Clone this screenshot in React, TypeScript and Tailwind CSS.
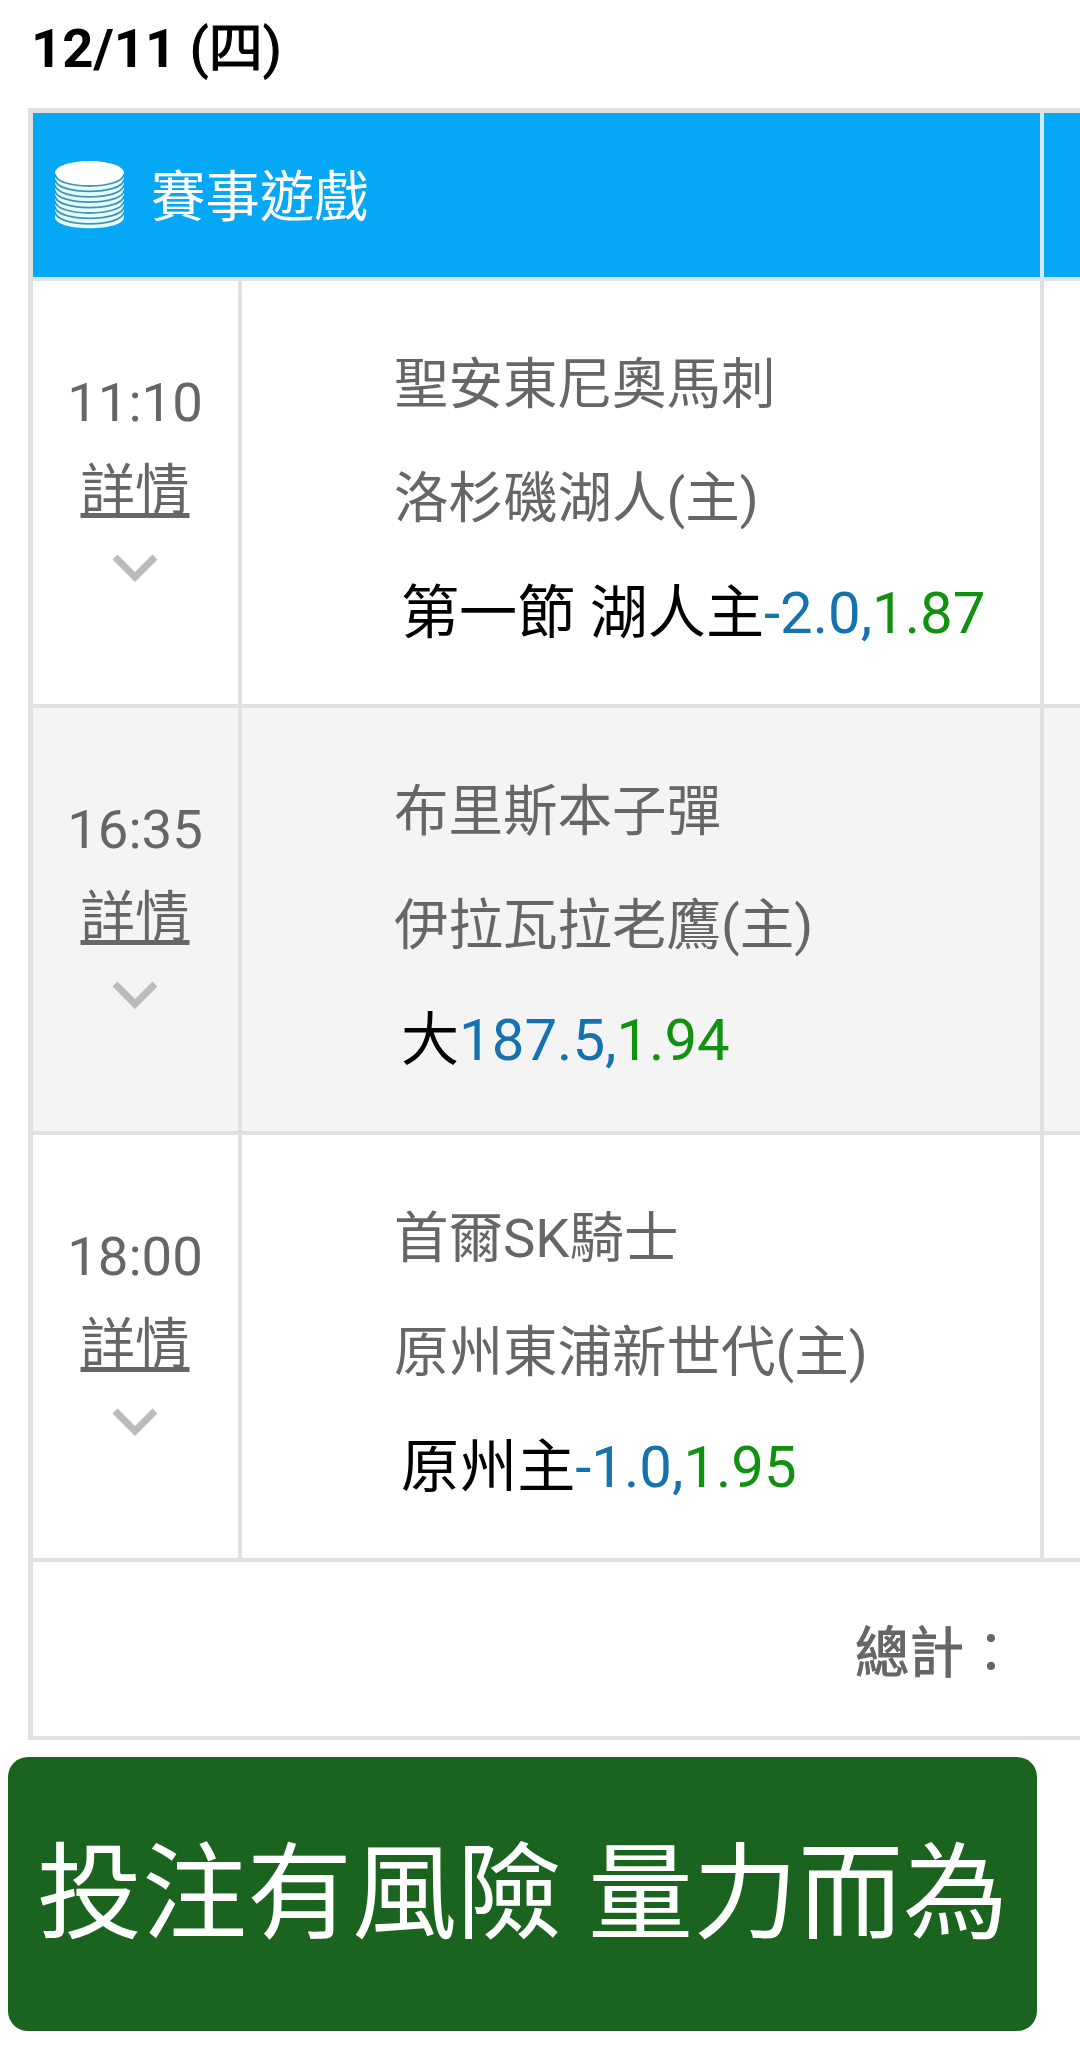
import React from 'react';

type Match = {
  time: string;
  away: string;
  home: string;
  pick: string;
  line: string;
  odds: string;
};

const matches: Match[] = [
  { time: '11:10', away: '聖安東尼奧馬刺', home: '洛杉磯湖人(主)', pick: '第一節 湖人主', line: '-2.0,', odds: '1.87' },
  { time: '16:35', away: '布里斯本子彈', home: '伊拉瓦拉老鷹(主)', pick: '大', line: '187.5,', odds: '1.94' },
  { time: '18:00', away: '首爾SK騎士', home: '原州東浦新世代(主)', pick: '原州主', line: '-1.0,', odds: '1.95' },
];

const seams = [12, 17.4, 22.8, 28.2, 33.6, 39, 44.4, 49.8];

function CoinStack() {
  return (
    <svg width="69" height="68" viewBox="0 0 69 68" fill="none">
      <path d="M0 12.5C0 -4 69 -4 69 12.5V56C69 71 0 71 0 56Z" fill="#e6fdff" />
      <ellipse cx="34.5" cy="12.3" rx="34.5" ry="12.3" fill="#fff" />
      {seams.map((y) => (
        <path key={y} d={`M0 ${y + 1}C1 ${y + 17} 68 ${y + 17} 69 ${y + 1}`} stroke="#4294b4" strokeWidth="1.8" />
      ))}
    </svg>
  );
}

function MatchRow({ match, striped }: { match: Match; striped: boolean }) {
  return (
    <div className={`flex h-[427px] border-b-4 border-[#e0e0e0] ${striped ? 'bg-[#f4f4f4]' : 'bg-white'}`}>
      <div className="flex w-[209px] shrink-0 flex-col items-center border-r-4 border-[#e0e0e0] pr-px pt-[76px] text-[54.5px] text-[#666]">
        <div className="h-[89px] leading-[90px]">{match.time}</div>
        <a className="h-[88px] leading-[88px] underline decoration-[5px] underline-offset-[4px]">詳情</a>
        <svg className="mt-[20px]" width="46" height="30" viewBox="0 0 46 30" fill="none">
          <path d="M3 3L23 23L43 3" stroke="#bbb" strokeWidth="7" />
        </svg>
      </div>
      <div className="w-[802px] shrink-0 whitespace-pre border-r-4 border-[#e0e0e0] pl-[152px] pt-[46px]">
        <div className="h-[114px] text-[54.5px] leading-[114px] text-[#666]">{match.away}</div>
        <div className="h-[114px] text-[54.5px] leading-[114px] text-[#666]">{match.home}</div>
        <div className="h-[114px] pl-[7px] text-[58.1px] leading-[116px] text-black">
          {match.pick}
          <span className="text-[#1472ae]">{match.line}</span>
          <span className="text-[#12900f]">{match.odds}</span>
        </div>
      </div>
    </div>
  );
}

export default function App() {
  return (
    <div className="h-[2049px] w-[1080px] overflow-hidden bg-white font-[Roboto,'Noto_Sans_CJK_TC',sans-serif]">
      <h1 className="h-[108px] pl-[31px] text-[54.5px] font-bold leading-[96px] text-black">
        12/11 <span className="font-normal [-webkit-text-stroke:1px_black]">(四)</span>
      </h1>
      <div className="ml-[28px] border-l-[5px] border-t-[5px] border-[#e0e0e0]">
        <div className="flex h-[168px] border-b-4 border-[#d9e6ec] bg-[#05a8f7]">
          <div className="flex w-[1011px] shrink-0 items-center border-r-4 border-[#d9e6ec] pl-[22px] text-[54.4px] text-white">
            <CoinStack />
            <span className="ml-[27px] pt-[5px]">賽事遊戲</span>
          </div>
        </div>
        {matches.map((match, i) => (
          <MatchRow key={match.time} match={match} striped={i % 2 === 1} />
        ))}
        <div className="h-[178px] border-b-4 border-[#e0e0e0] pl-[822px] text-[54.4px] leading-[183px] text-[#666]">
          <span className="[-webkit-text-stroke:1px_#666]">總計</span>：
        </div>
      </div>
      <div className="ml-[8px] mt-[17px] flex h-[274px] w-[1029px] items-center justify-center rounded-[20px] bg-[#1b641f] pt-[2px] text-[105px] text-white">
        投注有風險 量力而為
      </div>
    </div>
  );
}
